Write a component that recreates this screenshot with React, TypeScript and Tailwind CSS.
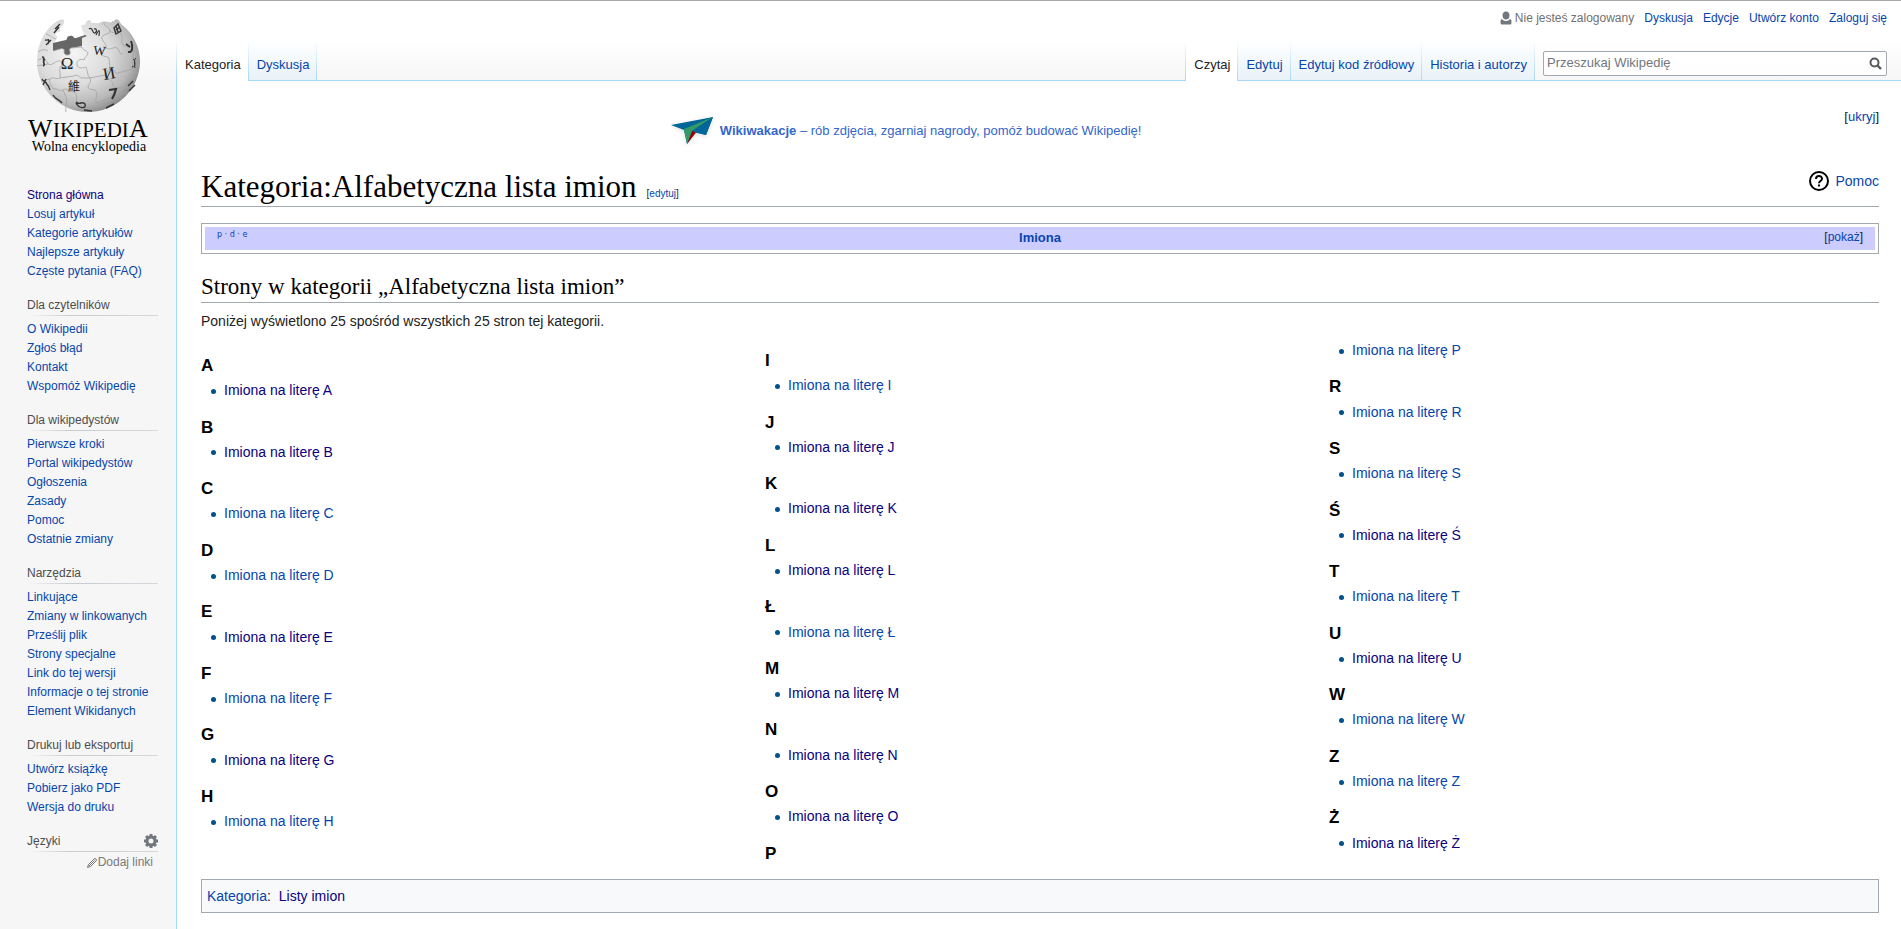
import type { ReactNode } from 'react';

const link = 'text-[#0645ad] hover:underline';
const visited = 'text-[#0b0080] hover:underline';

function A({ children, seen = false }: { children: ReactNode; seen?: boolean }) {
  return (
    <a href="#" className={seen ? visited : link}>
      {children}
    </a>
  );
}

const portals = [
  { title: 'Dla czytelników', links: ['O Wikipedii', 'Zgłoś błąd', 'Kontakt', 'Wspomóż Wikipedię'] },
  {
    title: 'Dla wikipedystów',
    links: ['Pierwsze kroki', 'Portal wikipedystów', 'Ogłoszenia', 'Zasady', 'Pomoc', 'Ostatnie zmiany'],
  },
  {
    title: 'Narzędzia',
    links: [
      'Linkujące',
      'Zmiany w linkowanych',
      'Prześlij plik',
      'Strony specjalne',
      'Link do tej wersji',
      'Informacje o tej stronie',
      'Element Wikidanych',
    ],
  },
  { title: 'Drukuj lub eksportuj', links: ['Utwórz książkę', 'Pobierz jako PDF', 'Wersja do druku'] },
];

const seenLetters = 'ABEGJKLMNOŚUŻ';

function Globe() {
  return (
    <svg viewBox="0 0 135 155" className="h-[155px] w-[135px]" role="img" aria-label="Wikipedia – Wolna encyklopedia">
      <defs>
        <radialGradient id="ball" cx="0.36" cy="0.36" r="0.7">
          <stop offset="0" stopColor="#f4f4f4" />
          <stop offset="0.5" stopColor="#dcdcdc" />
          <stop offset="0.8" stopColor="#b8b8b8" />
          <stop offset="1" stopColor="#858585" />
        </radialGradient>
      </defs>
      <path
        fill="url(#ball)"
        d="M44 15 C41 14 39 15 36 17 C25 24 17 39 17 56 C17 84 40 107 68 107 C97 107 120 84 120 56 C120 41 112 27 101 19 C99 14 96 13 94 16 C91 19 86 15 81 17 C77 20 74 17 71 18 C72 15 68 14 66 17 C66 20 64 20 61 20 L64 31 L48 36 L33 40 C34 36 38 35 37 31 C34 30 36 27 39 27 C42 25 39 22 42 21 C44 20 44 17 44 15 Z"
      />
      <path
        fill="#666"
        d="M33 38 L46 35 C48 34 46 31 50 31 C54 30 53 34 56 33 L65 30 L67 31 L62 33 L62 41 L51 43 C48 44 51 47 50 49 C48 51 44 50 44 47 C45 44 43 43 40 44 L33 46 Z"
      />
      <g fill="none" stroke="#a3a3a3" strokeWidth="0.8">
        <path d="M33 46 L40 44 C43 43 45 44 44 47 C44 50 48 51 50 49 C51 47 48 44 51 43 L62 42 C63 46 67 45 68 48 C68 51 64 52 64 55" />
        <path d="M64 55 C60 53 56 56 57 60 C58 64 63 63 66 62 C68 67 67 70 70 73 L85 70 C88 70 86 65 90 64 C95 63 94 69 98 68 L112 64 C116 64 118 60 120 58" />
        <path d="M18 55 C24 52 27 56 28 59 C32 61 34 57 38 56 C42 55 43 60 40 62 C39 65 41 70 40 73 L54 71 C57 68 59 73 63 73 L70 73" />
        <path d="M40 73 C36 75 33 71 30 74 C28 77 32 81 33 84 C38 83 39 87 43 85 C46 82 51 88 55 87 C58 90 55 96 58 98 L58 106" />
        <path d="M70 73 C72 78 68 79 68 82 C69 86 74 83 76 86 C78 91 75 94 76 98 L88 94 C91 89 94 94 98 91 L106 87" />
        <path d="M85 70 C88 75 92 75 93 79 C92 82 97 85 100 82 C104 82 108 84 112 79" />
        <path d="M84 17 C83 22 90 21 90 26 C90 30 84 28 82 32 C81 36 87 38 86 43 C84 46 80 45 81 49 C82 52 87 51 89 53 L90 64" />
        <path d="M90 26 C94 30 97 24 100 27 C104 32 100 35 103 40 C106 43 110 40 112 43 C116 48 111 51 113 55 L112 64" />
        <path d="M86 43 C90 46 94 41 97 43 C100 45 99 50 103 49 M17 61 L28 59 M21 76 L30 74 M46 107 C45 100 48 98 46 92 L43 85 M102 94 L98 91" />
        <path d="M26 29 C29 29 31 33 36 34 M28 46 C24 43 20 46 18 47" />
      </g>
      <g fill="#222" fontFamily="'Liberation Serif', serif" textAnchor="middle">
        <text x="47" y="64" fontSize="17">Ω</text>
        <text x="79" y="50" fontSize="13" transform="rotate(5 79 50)">W</text>
        <text x="90" y="74" fontSize="17" transform="rotate(-10 90 74)">И</text>
        <text x="54" y="86" fontSize="12" fontFamily="'Noto Sans CJK TC', sans-serif">維</text>
      </g>
      <g fill="none" stroke="#333" strokeWidth="1.4">
        <path d="M69 24 C73 21 72 29 75 28 C78 26 76 23 74 24 M76 30 C79 24 80 24 79 31" strokeWidth="1.2" />
        <path d="M94 23 L98 19 L101 26 L96 29 Z M96 25 L100 22 M98 27 L96 21" />
        <path d="M89 85 L96 84 C95 88 94 91 92 94" strokeWidth="2.200" />
        <path d="M106 39 L110 42 M108 47 C113 48 113 41 111 36" strokeWidth="2" />
        <path d="M25 35 C28 36 30 32 28 39 M31 35 L26 40 M35 24 L40 19 M34 28 L39 22" />
        <path d="M22 52 C26 52 22 56 24 59 M25 54 C21 57 27 59 23 61 M22 74 C24 78 25 74 28 81 M26 74 L23 80 M28 80 L30 85" />
        <path d="M33 90 C36 95 39 94 42 98 M56 98 C59 104 67 104 65 99 C62 95 60 101 56 97 M64 105 L72 106 M86 103 L94 99 M108 81 L113 76 M109 86 L115 80" />
        <path d="M113 54 C116 55 114 61 115 63 M116 53 C112 57 118 60 112 62" strokeWidth="1" />
      </g>
      <g fill="#000" fontFamily="'Liberation Serif', serif">
        <text x="8" y="132" fontSize="26">W</text>
        <text x="33" y="132" fontSize="21">IKIPEDI</text>
        <text x="109" y="132" fontSize="26">A</text>
        <text x="69" y="146" fontSize="14" textAnchor="middle">
          Wolna encyklopedia
        </text>
      </g>
    </svg>
  );
}

function Plane() {
  return (
    <svg viewBox="0 0 44 30" className="h-[30px] w-11 drop-shadow-sm" aria-hidden="true">
      <path d="M1 9 L43 1 L36 19 L25 16.500 L17 28 L14 14 Z" fill="#069" />
      <path d="M22 15 L26 16.500 L17 28 Z" fill="#900" />
      <path d="M43 1 L14 13 L17 28 L22 15 Z" fill="#396" />
      <path d="M43 1 L36 19 L22 15 Z" fill="#069" />
    </svg>
  );
}

function PortalHeading({ children }: { children: ReactNode }) {
  return (
    <div>
      <h3 className="flex h-[20px] items-center justify-between text-xs text-[#4d4d4d]">{children}</h3>
      <div className="h-px bg-linear-to-r from-transparent via-[#c8ccd1] via-33% to-[#d5d8dc]" />
    </div>
  );
}

function Sidebar() {
  return (
    <nav className="w-[176px] shrink-0 pl-5" aria-label="Nawigacja">
      <a href="#" className="block pt-1">
        <Globe />
      </a>
      <div className="pr-[18px] pl-[7px] text-xs leading-[19px]">
        <ul className="pt-[26px]">
          {['Strona główna', 'Losuj artykuł', 'Kategorie artykułów', 'Najlepsze artykuły', 'Częste pytania (FAQ)'].map(
            (t, i) => (
              <li key={t}>
                <A seen={i === 0}>{t}</A>
              </li>
            ),
          )}
        </ul>
        {portals.map((p) => (
          <section key={p.title} className="pt-[14px]">
            <PortalHeading>{p.title}</PortalHeading>
            <ul className="pt-[4px]">
              {p.links.map((t) => (
                <li key={t}>
                  <A>{t}</A>
                </li>
              ))}
            </ul>
          </section>
        ))}
        <section className="pt-[14px]">
          <PortalHeading>
            Języki
            <button type="button" aria-label="Ustawienia języka">
              <svg viewBox="-7 -7 14 14" className="size-[14px]">
                <g fill="#72777d">
                  <path
                    fillRule="evenodd"
                    d="M0 -5.500 A5.500 5.500 0 1 0 0 5.500 A5.500 5.500 0 1 0 0 -5.500 M0 -2.500 A2.500 2.500 0 1 1 0 2.500 A2.500 2.500 0 1 1 0 -2.500"
                  />
                  {[0, 45, 90, 135, 180, 225, 270, 315].map((a) => (
                    <rect key={a} x="-1.500" y="-7" width="3" height="3" transform={`rotate(${a})`} />
                  ))}
                </g>
              </svg>
            </button>
          </PortalHeading>
          <a href="#" className="flex items-center justify-end pt-px pr-[5px] text-[#797979] hover:underline">
            <svg viewBox="0 0 12 12" className="size-3" fill="none" stroke="#797979">
              <path d="M1.500 10.500 L2.500 7.500 L8 2 Q9 1 10 2 Q11 3 10 4 L4.500 9.500 Z M3.500 8.500 L8.500 3.500 M2.500 7.500 L4.500 9.500" />
            </svg>
            Dodaj linki
          </a>
        </section>
      </div>
    </nav>
  );
}

function Divider() {
  return <span className="w-px shrink-0 bg-linear-to-b from-transparent to-[#a7d7f9]" />;
}

function Tab({ children, active = false }: { children: ReactNode; active?: boolean }) {
  return (
    <>
      <a
        href="#"
        className={
          active
            ? 'bg-white pt-[17px] pr-[7px] pl-2 text-[#222]'
            : 'border-b border-[#a7d7f9] bg-linear-to-b from-white to-[#e8f2f8] pt-[17px] pr-[7px] pl-2 text-[#0645ad]'
        }
      >
        {children}
      </a>
      <Divider />
    </>
  );
}

function Header() {
  return (
    <header>
      <div className="flex h-[39px] items-start justify-end gap-[10px] pt-[8px] pr-[14px] text-xs leading-[18px]">
        <span className="flex items-center gap-[3px] text-[#707070]">
          <svg viewBox="0 0 12 14" className="h-[14px] w-3" fill="#72777d">
            <path d="M6 0.500 C8.500 0.500 9.500 2.500 9.500 4.500 C9.500 7 8 8.500 6 8.500 C4 8.500 2.500 7 2.500 4.500 C2.500 2.500 3.500 0.500 6 0.500 Z M2 8 C3 9.500 4.500 10 6 10 C7.500 10 9 9.500 10 8 C11.500 8.500 11.500 10 11.500 11 C11.500 13 11 13.500 10 13.500 L2 13.500 C1 13.500 0.500 13 0.500 11 C0.500 10 0.500 8.500 2 8 Z" />
          </svg>
          Nie jesteś zalogowany
        </span>
        <A>Dyskusja</A>
        <A>Edycje</A>
        <A>Utwórz konto</A>
        <A>Zaloguj się</A>
      </div>
      <div className="flex h-[41px] text-[13px] leading-4">
        <Divider />
        <Tab active>Kategoria</Tab>
        <Tab>Dyskusja</Tab>
        <div className="grow border-b border-[#a7d7f9]" />
        <Divider />
        <Tab active>Czytaj</Tab>
        <Tab>Edytuj</Tab>
        <Tab>Edytuj kod źródłowy</Tab>
        <Tab>Historia i autorzy</Tab>
        <form className="border-b border-[#a7d7f9] pt-[11px] pr-[14px] pl-2" onSubmit={(e) => e.preventDefault()}>
          <div className="flex h-[25px] w-[344px] items-center rounded-xs border border-[#a2a9b1] bg-white/90 pr-1">
            <input
              type="search"
              aria-label="Przeszukaj Wikipedię"
              placeholder="Przeszukaj Wikipedię"
              className="h-full min-w-0 grow px-[3px] pb-[2px] outline-none placeholder:text-[#72777d]"
            />
            <button type="submit" aria-label="Szukaj">
              <svg viewBox="0 0 13 13" className="size-[13px]" fill="none" stroke="#54595d">
                <circle cx="5.500" cy="5.500" r="4" strokeWidth="2" />
                <path d="M8.500 8.500 L12 12" strokeWidth="2.400" />
              </svg>
            </button>
          </div>
        </form>
      </div>
    </header>
  );
}

function Heading({ letter }: { letter: string }) {
  return <h3 className="pt-2 text-[17px] leading-[1.6] font-bold text-black">{letter}</h3>;
}

function Entry({ letter }: { letter: string }) {
  return (
    <ul className="mb-1 ml-[10px] leading-[1.6]">
      <li className="flex items-center gap-2">
        <span className="mt-[2px] size-[5px] rounded-full bg-[#00528c]" />
        <A seen={seenLetters.includes(letter)}>Imiona na literę {letter}</A>
      </li>
    </ul>
  );
}

function Letters({ letters }: { letters: string }) {
  return letters.split('').map((l) => (
    <div key={l}>
      <Heading letter={l} />
      <Entry letter={l} />
    </div>
  ));
}

export default function App() {
  return (
    <div className="flex min-h-screen border-t border-[#aaa] bg-[#f6f6f6] bg-[linear-gradient(#fff_40px,#f6f6f6_80px)] bg-[length:100%_80px] bg-no-repeat font-['Liberation_Sans',Arial,sans-serif] text-[#222]">
      <Sidebar />
      <div className="flex min-w-0 grow flex-col">
        <Header />
        <main className="grow border-l border-[#a7d7f9] bg-white pr-[22px] pb-4 pl-6 text-sm">
          <div className="flex h-[75px] items-start">
            <a
              href="#"
              className="flex grow items-center justify-center gap-[6px] pt-[35px] pr-[234px] text-[13px] text-[#36c]"
            >
              <Plane />
              <span>
                <b>Wikiwakacje</b> – rób zdjęcia, zgarniaj nagrody, pomóż budować Wikipedię!
              </span>
            </a>
            <span className="pt-[27px] text-[13px] leading-[18px]">
              [<button type="button" className={link}>ukryj</button>]
            </span>
          </div>
          <div className="flex h-[51px] items-end border-b border-[#a2a9b1]">
            <h1 className="font-['Liberation_Serif',serif] text-[31px] leading-[38px] text-black">
              Kategoria:Alfabetyczna lista imion
            </h1>
            <span className="pb-[5px] pl-[10px] text-[10px] leading-[14px]">
              [<A>edytuj</A>]
            </span>
            <a href="#" className="mb-[15px] ml-auto flex items-center gap-[6px] text-[#0645ad]">
              <svg viewBox="0 0 20 20" className="size-5" fill="none" stroke="#000" strokeWidth="2">
                <circle cx="10" cy="10" r="9" />
                <path d="M7 8 C7 4 13 4 13 7.800 C13 10 10 10 10 12.200 M10 13.500 V15.500" />
              </svg>
              Pomoc
            </a>
          </div>
          <section className="mt-4 border border-[#a2a9b1] p-[3px]">
            <div className="grid h-[23px] grid-cols-3 bg-[#ccf] px-3 leading-[22px]">
              <div className="font-['DejaVu_Sans',sans-serif] text-[8px] leading-[16px] text-[#0645ad]">
                <A>p</A> · <A>d</A> · <A>e</A>
              </div>
              <div className="text-center text-[13px] font-bold">
                <A>Imiona</A>
              </div>
              <div className="text-right text-xs leading-[20px]">
                [<button type="button" className={link}>pokaż</button>]
              </div>
            </div>
          </section>
          <h2 className="mt-[18px] border-b border-[#a2a9b1] font-['Liberation_Serif',serif] text-[23px] leading-[30px] text-black">
            Strony w kategorii „Alfabetyczna lista imion”
          </h2>
          <p className="mt-[7px] leading-[22px]">Poniżej wyświetlono 25 spośród wszystkich 25 stron tej kategorii.</p>
          <div className="mt-[7px] grid grid-cols-3 gap-[14px]">
            <div className="pt-[5px]">
              <Letters letters="ABCDEFGH" />
            </div>
            <div>
              <Letters letters="IJKLŁMNO" />
              <Heading letter="P" />
            </div>
            <div>
              <Entry letter="P" />
              <Letters letters="RSŚTUWZŻ" />
            </div>
          </div>
          <div className="mt-[12px] flex gap-2 border border-[#a2a9b1] bg-[#f8f9fa] px-[5px] py-[5px] leading-[22px]">
            <span>
              <A>Kategoria</A>:
            </span>
            <A seen>Listy imion</A>
          </div>
        </main>
      </div>
    </div>
  );
}
